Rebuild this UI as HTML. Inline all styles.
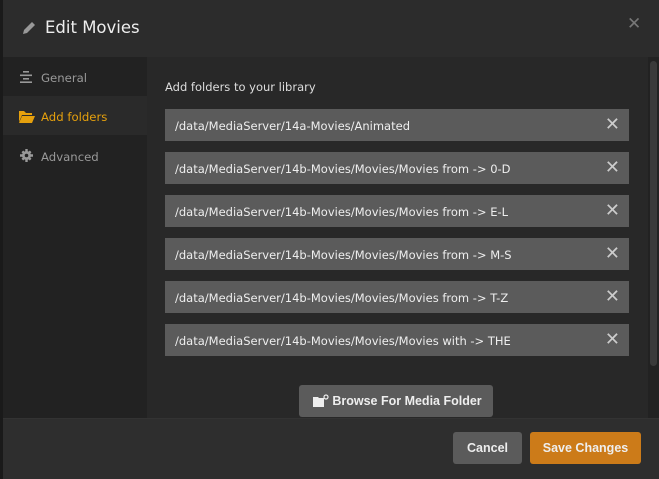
<!DOCTYPE html>
<html><head><style>
*{margin:0;padding:0;box-sizing:border-box}
body{width:659px;height:479px;background:#1a1a1a;font-family:"DejaVu Sans","Liberation Sans",sans-serif;overflow:hidden;position:relative}
.modal{position:absolute;left:3px;top:0;width:656px;height:479px;background:#2b2b2b}
.hdr{position:absolute;left:0;top:0;width:656px;height:57px;background:#2c2c2c}
.title{position:absolute;left:42px;top:18px;color:#eee;font-size:16.5px}
.side{position:absolute;left:0;top:57px;width:144px;height:361px;background:#222}
.si{position:absolute;left:0;width:144px;height:39px;color:#999;font-size:11.7px;padding:14px 0 0 38px}
.si.act{background:#2a2a2a;color:#e5a00d}
.cont{position:absolute;left:144px;top:57px;width:501px;height:361px;background:#282828}
.lbl{position:absolute;left:18px;top:23px;color:#ddd;font-size:11.5px}
.row{position:absolute;left:18px;width:464px;height:32px;background:#5b5b5b;color:#eee;font-size:11.5px;padding:10px 0 0 10px}
.row .x{position:absolute;right:9px;top:5px;color:#ccc;font-size:18px;font-weight:bold}
.sb{position:absolute;left:645px;top:57px;width:11px;height:361px;background:#222}
.sb div{position:absolute;left:2px;top:4px;width:7px;height:305px;background:#3a3a3a;border-radius:4px}
.foot{position:absolute;left:0;top:418px;width:656px;height:61px;background:#2e2e2e;border-top:1px solid #333}
.btn{position:absolute;height:32px;border-radius:3px;color:#eee;font-size:12.5px;font-weight:bold;text-align:center;line-height:33px;font-family:"Liberation Sans",sans-serif}
</style></head><body>
<div class="modal">
<div class="hdr">
<svg style="position:absolute;left:18px;top:20px" width="16" height="16" viewBox="0 0 16 16"><path d="M2 14 L3 10 L11 2 L14 5 L6 13 Z" fill="#999"/></svg>
<div class="title">Edit Movies</div>
<div style="position:absolute;left:624px;top:14px;color:#777;font-size:17px;font-weight:bold">✕</div>
</div>
<div class="side">
<div class="si" style="top:0"><svg style="position:absolute;left:17px;top:14px" width="12" height="12" viewBox="0 0 12 12"><rect x="3" y="0" width="6" height="1.6" fill="#999"/><rect x="0" y="3.5" width="12" height="1.6" fill="#999"/><rect x="3" y="7" width="6" height="1.6" fill="#999"/><rect x="0" y="10.4" width="12" height="1.6" fill="#999"/></svg>General</div>
<div class="si act" style="top:39px"><svg style="position:absolute;left:16px;top:14px" width="16" height="13" viewBox="0 0 16 13"><path d="M0 1h5l2 2h6v2H3L0 12Z" fill="#e5a00d"/><path d="M3 6h13l-3 7H0Z" fill="#e5a00d"/></svg>Add folders</div>
<div class="si" style="top:79px"><svg style="position:absolute;left:17px;top:13px" width="13" height="13" viewBox="0 0 13 13"><circle cx="6.5" cy="6.5" r="4.5" fill="#999"/><path d="M5.3 0h2.4v13H5.3ZM0 5.3h13v2.4H0Z" fill="#999"/><path d="M1.5 3.2L3.2 1.5 11.5 9.8 9.8 11.5ZM9.8 1.5l1.7 1.7-8.3 8.3-1.7-1.7Z" fill="#999"/><circle cx="6.5" cy="6.5" r="1.8" fill="#222"/></svg>Advanced</div>
</div>
<div class="cont">
<div class="lbl">Add folders to your library</div>
<div class="row" style="top:52px">/data/MediaServer/14a-Movies/Animated<span class="x">✕</span></div>
<div class="row" style="top:95px">/data/MediaServer/14b-Movies/Movies/Movies from -&gt; 0-D<span class="x">✕</span></div>
<div class="row" style="top:138px">/data/MediaServer/14b-Movies/Movies/Movies from -&gt; E-L<span class="x">✕</span></div>
<div class="row" style="top:181px">/data/MediaServer/14b-Movies/Movies/Movies from -&gt; M-S<span class="x">✕</span></div>
<div class="row" style="top:224px">/data/MediaServer/14b-Movies/Movies/Movies from -&gt; T-Z<span class="x">✕</span></div>
<div class="row" style="top:267px">/data/MediaServer/14b-Movies/Movies/Movies with -&gt; THE<span class="x">✕</span></div>
<div class="btn" style="left:152px;top:328px;width:194px;background:#5b5b5b;padding-left:22px">Browse For Media Folder
<svg style="position:absolute;left:14px;top:9px" width="16" height="14" viewBox="0 0 16 14"><path d="M0 3h5l1 1h5v9H0Z" fill="#eee"/><circle cx="13" cy="3" r="2" fill="none" stroke="#eee" stroke-width="1.2"/></svg></div>
</div>
<div class="sb"><div></div></div>
<div class="foot">
<div class="btn" style="left:450px;top:13px;width:69px;background:#5b5b5b">Cancel</div>
<div class="btn" style="left:527px;top:13px;width:111px;background:#cc7b19">Save Changes</div>
</div>
</div>
</body></html>
